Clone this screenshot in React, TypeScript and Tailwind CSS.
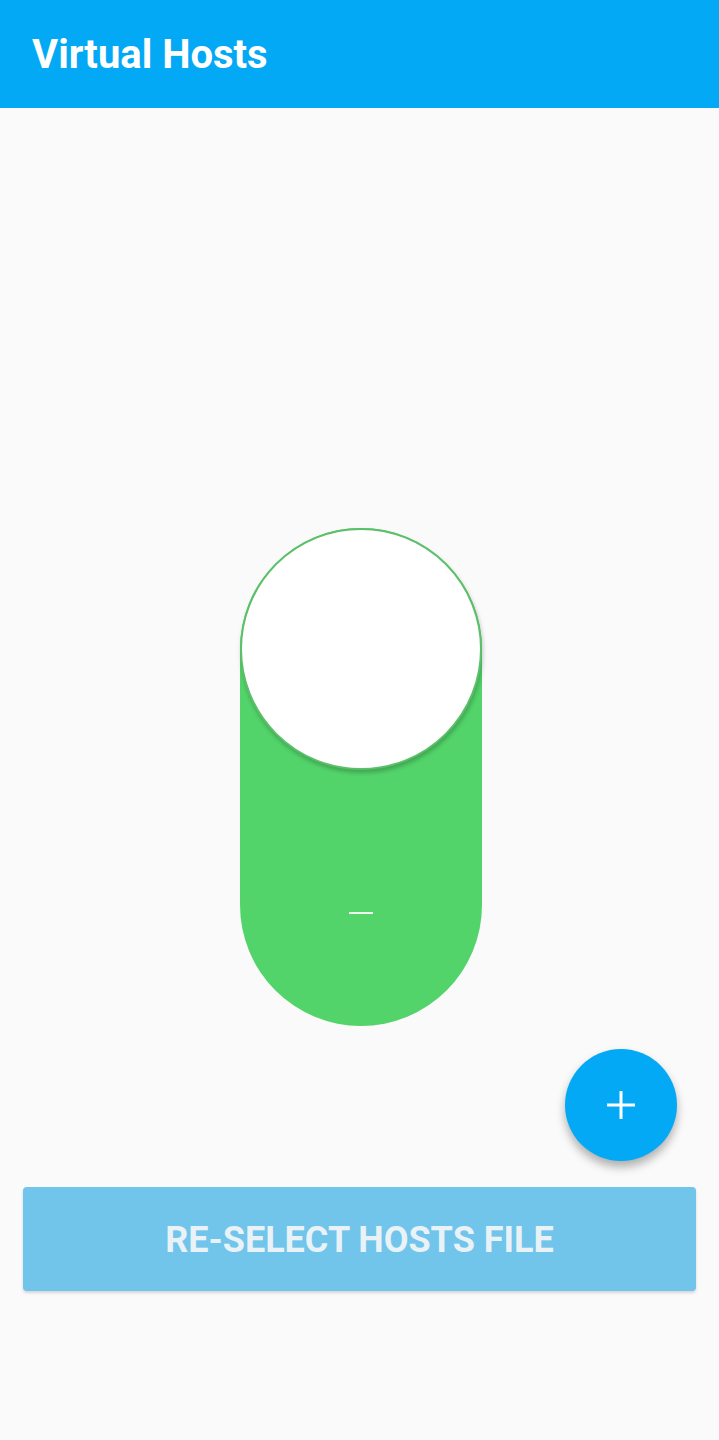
import React from "react";

export default function App() {
  return (
    <div className="min-h-[1440px] bg-[#fafafa] flex flex-col font-['Roboto',sans-serif]">
      <header className="h-[108px] bg-[#03a9f4] flex items-center px-8 shrink-0">
        <h1 className="text-white text-[40px] font-bold leading-none pt-[2px]">
          Virtual Hosts
        </h1>
      </header>

      <main className="flex flex-col">
        <div className="pt-[420px] flex justify-center">
          <div className="relative w-[242px] h-[498px] rounded-full bg-[#53d46a] flex flex-col items-center translate-x-[1px]">
            <div className="w-[242px] h-[242px] rounded-full bg-white border-2 border-[#5cbf6a] shadow-[1px_3px_4px_rgba(0,0,0,0.22)]" />
            <div className="mt-[142px] w-[24px] h-[2px] bg-white/90" />
          </div>
        </div>

        <div className="flex justify-end pr-[42px] pt-[23px]">
          <button className="w-[112px] h-[112px] rounded-full bg-[#03a9f4] flex items-center justify-center shadow-[0_6px_10px_rgba(0,0,0,0.3)]">
            <svg width="30" height="30" viewBox="0 0 30 30" fill="none">
              <path d="M15 1v28M1 15h28" stroke="white" strokeWidth="3" />
            </svg>
          </button>
        </div>

        <div className="px-[23px] pt-[26px]">
          <button className="w-full h-[104px] rounded-[4px] bg-[#71c4ea] shadow-[0_2px_3px_rgba(0,0,0,0.15)] flex items-center justify-center">
            <span className="text-[#e9f2f7] text-[36px] font-bold leading-none pt-[2px]">
              RE-SELECT HOSTS FILE
            </span>
          </button>
        </div>
      </main>
    </div>
  );
}
